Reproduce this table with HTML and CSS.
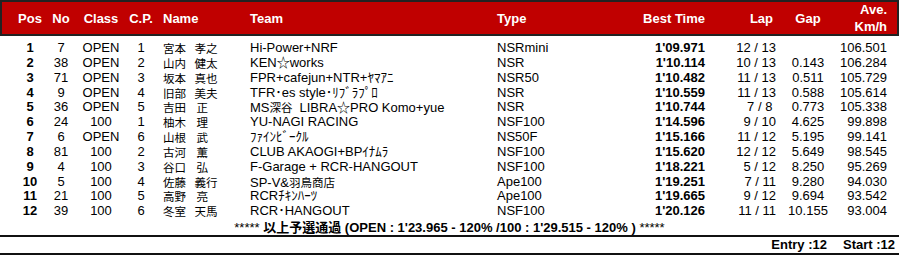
FILE: index.html
```html
<!DOCTYPE html>
<html lang="ja">
<head>
<meta charset="utf-8">
<title>Qualifying Result</title>
<link rel="stylesheet" href="styles.css">
</head>
<body>
<div class="sheet">
  <div class="row head">
    <div class="c">Pos</div>
    <div class="c">No</div>
    <div class="c">Class</div>
    <div class="c">C.P.</div>
    <div class="name-h">Name</div>
    <div>Team</div>
    <div class="type">Type</div>
    <div class="r">Best Time</div>
    <div class="r lap-h">Lap</div>
    <div class="c">Gap</div>
    <div class="r">Ave.<br>Km/h</div>
  </div>
  <div class="body">
    <div class="row"><div class="c b">1</div><div class="c">7</div><div class="c">OPEN</div><div class="c">1</div><div class="name"><span>宮本</span><span>孝之</span></div><div>Hi-Power+NRF</div><div class="type">NSRmini</div><div class="r b">1'09.971</div><div class="r">12 / 13</div><div class="c"></div><div class="r">106.501</div></div>
    <div class="row"><div class="c b">2</div><div class="c">38</div><div class="c">OPEN</div><div class="c">2</div><div class="name"><span>山内</span><span>健太</span></div><div>KEN☆works</div><div class="type">NSR</div><div class="r b">1'10.114</div><div class="r">10 / 13</div><div class="c">0.143</div><div class="r">106.284</div></div>
    <div class="row"><div class="c b">3</div><div class="c">71</div><div class="c">OPEN</div><div class="c">3</div><div class="name"><span>坂本</span><span>真也</span></div><div>FPR+cafejun+NTR+ﾔﾏｱﾆ</div><div class="type">NSR50</div><div class="r b">1'10.482</div><div class="r">11 / 13</div><div class="c">0.511</div><div class="r">105.729</div></div>
    <div class="row"><div class="c b">4</div><div class="c">9</div><div class="c">OPEN</div><div class="c">4</div><div class="name"><span>旧部</span><span>美夫</span></div><div>TFR･es style･ﾘﾌﾞﾗﾌﾟﾛ</div><div class="type">NSR</div><div class="r b">1'10.559</div><div class="r">11 / 13</div><div class="c">0.588</div><div class="r">105.614</div></div>
    <div class="row"><div class="c b">5</div><div class="c">36</div><div class="c">OPEN</div><div class="c">5</div><div class="name"><span>吉田</span><span class="one">正</span></div><div>MS<span class="j sp">深谷</span>LIBRA☆PRO Komo+yue</div><div class="type">NSR</div><div class="r b">1'10.744</div><div class="r">7 / 8&nbsp;</div><div class="c">0.773</div><div class="r">105.338</div></div>
    <div class="row"><div class="c b">6</div><div class="c">24</div><div class="c">100</div><div class="c">1</div><div class="name"><span>柚木</span><span class="one">理</span></div><div>YU-NAGI RACING</div><div class="type">NSF100</div><div class="r b">1'14.596</div><div class="r">9 / 10</div><div class="c">4.625</div><div class="r">99.898</div></div>
    <div class="row"><div class="c b">7</div><div class="c">6</div><div class="c">OPEN</div><div class="c">6</div><div class="name"><span>山根</span><span class="one">武</span></div><div>ﾌｧｲﾝﾋﾞｰｸﾙ</div><div class="type">NS50F</div><div class="r b">1'15.166</div><div class="r">11 / 12</div><div class="c">5.195</div><div class="r">99.141</div></div>
    <div class="row"><div class="c b">8</div><div class="c">81</div><div class="c">100</div><div class="c">2</div><div class="name"><span>古河</span><span class="one">薫</span></div><div>CLUB AKAOGI+BPｲﾅﾑﾗ</div><div class="type">NSF100</div><div class="r b">1'15.620</div><div class="r">12 / 12</div><div class="c">5.649</div><div class="r">98.545</div></div>
    <div class="row"><div class="c b">9</div><div class="c">4</div><div class="c">100</div><div class="c">3</div><div class="name"><span>谷口</span><span class="one">弘</span></div><div>F-Garage + RCR-HANGOUT</div><div class="type">NSF100</div><div class="r b">1'18.221</div><div class="r">5 / 12</div><div class="c">8.250</div><div class="r">95.269</div></div>
    <div class="row"><div class="c b">10</div><div class="c">5</div><div class="c">100</div><div class="c">4</div><div class="name"><span>佐藤</span><span>義行</span></div><div>SP-V&amp;<span class="j">羽鳥商店</span></div><div class="type">Ape100</div><div class="r b">1'19.251</div><div class="r">7 / 11</div><div class="c">9.280</div><div class="r">94.030</div></div>
    <div class="row"><div class="c b">11</div><div class="c">21</div><div class="c">100</div><div class="c">5</div><div class="name"><span>高野</span><span class="one">亮</span></div><div>RCRﾁｷﾝﾊｰﾂ</div><div class="type">Ape100</div><div class="r b">1'19.665</div><div class="r">9 / 12</div><div class="c">9.694</div><div class="r">93.542</div></div>
    <div class="row"><div class="c b">12</div><div class="c">39</div><div class="c">100</div><div class="c">6</div><div class="name"><span>冬室</span><span>天馬</span></div><div>RCR･HANGOUT</div><div class="type">NSF100</div><div class="r b">1'20.126</div><div class="r">11 / 11</div><div class="c">10.155</div><div class="r">93.004</div></div>
  </div>
  <div class="note"><span class="ast">*****</span> <b>以上予選通過 (OPEN : 1'23.965 - 120% /100 : 1'29.515 - 120% )</b> <span class="ast">*****</span></div>
  <div class="counts"><span>Entry :12</span><span>Start :12</span></div>
</div>
</body>
</html>
```

FILE: styles.css
```css
* { box-sizing: border-box; }
html, body { margin: 0; padding: 0; background: #fff; }
body {
  font-family: "Liberation Sans", Arial, "Noto Sans CJK JP", sans-serif;
  font-size: 13px;
  color: #000;
}
.sheet { width: 899px; }

.row {
  display: grid;
  grid-template-columns: 32px 30px 50px 30px 94px 246px 104px 105px 71px 64px 47px;
  padding-left: 14px;
  height: 14.85px;
  line-height: 14.85px;
  white-space: nowrap;
}
.c { text-align: center; }
.r { text-align: right; }
.b { font-weight: bold; }
.name-h { padding-left: 7px; }
.name {
  display: flex;
  gap: 8.5px;
  padding-left: 7px;
  font-family: "Noto Sans CJK JP", sans-serif;
  font-size: 11.5px;
}
.name .one { margin-left: 2px; }
.type { padding-left: 1px; }
.j { font-family: "Noto Sans CJK JP", sans-serif; font-size: 11.5px; }
.sp { margin-right: 7px; }

.head {
  height: 36px;
  line-height: 17px;
  align-items: center;
  background: #c00000;
  color: #fff;
  font-weight: bold;
  box-shadow: inset 0 0 0 2px #222;
}
.lap-h { padding-right: 3px; }

.body { padding-top: 5px; }

.note {
  height: 17.8px;
  line-height: 18px;
  text-align: center;
  border-bottom: 2px solid #111;
  white-space: nowrap;
}
.ast { font-weight: normal; }

.counts {
  display: flex;
  justify-content: flex-end;
  gap: 16px;
  height: 18px;
  line-height: 16px;
  padding-right: 4px;
  font-weight: bold;
  border-bottom: 2px solid #111;
}
```
